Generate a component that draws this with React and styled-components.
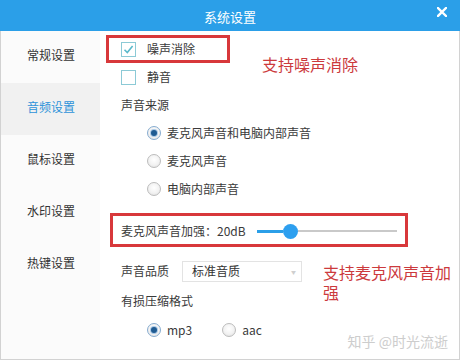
import styled, { createGlobalStyle } from "styled-components";

const GlobalStyle = createGlobalStyle`
  body {
    margin: 0;
    background: #fff;
    font-family: "Noto Sans CJK SC", "Noto Sans", sans-serif;
  }
`;

const Window = styled.div`
  width: 460px;
  height: 360px;
  display: flex;
  flex-direction: column;
  background: #fff;
`;

const TitleBar = styled.div`
  height: 31px;
  flex-shrink: 0;
  background: #2b9fe8;
  color: #fff;
  display: grid;
  grid-template-columns: 1fr auto 1fr;
  align-items: center;
  font-size: 13px;
  line-height: 1;
`;

const Title = styled.div`
  grid-column: 2;
  padding-top: 1px;
`;

const Close = styled.div`
  justify-self: end;
  margin-right: 13px;
  margin-bottom: 8px;
  display: flex;
`;

const Body = styled.div`
  flex: 1;
  display: flex;
  border: 1px solid #d2d2d2;
  border-top: none;
`;

const Sidebar = styled.div`
  width: 99px;
  flex-shrink: 0;
  background: #fbfbfb;
  display: flex;
  flex-direction: column;
`;

const NavItem = styled.div`
  height: 52px;
  box-sizing: border-box;
  padding: 0 0 6px 26px;
  display: flex;
  align-items: center;
  font-size: 12px;
  color: ${(p) => (p.$active ? "#2e93d9" : "#333")};
  background: ${(p) => (p.$active ? "#f1f1f1" : "transparent")};
`;

const Content = styled.div`
  flex: 1;
  position: relative;
  padding-top: 4px;
  display: flex;
  flex-direction: column;
  font-size: 12px;
  color: #3a3a3a;
  line-height: 1;
`;

const Row = styled.div`
  display: flex;
  align-items: center;
  height: ${(p) => p.$h || 28}px;
  padding-left: ${(p) => p.$indent || 0}px;
  margin-top: ${(p) => p.$mt || 0}px;
  flex-shrink: 0;
`;

const Highlight = styled.div`
  box-sizing: border-box;
  border: 3px solid #d8383b;
  display: flex;
  align-items: center;
  flex-shrink: 0;
  width: ${(p) => p.$w}px;
  height: ${(p) => p.$h}px;
  margin-left: ${(p) => p.$ml}px;
  padding-left: ${(p) => p.$pl}px;
  padding-top: ${(p) => p.$pt || 0}px;
`;

const Note = styled.div`
  color: #cc3a3d;
  font-size: 16px;
  line-height: 20px;
  align-self: flex-start;
  flex-shrink: 0;
  margin-left: ${(p) => p.$ml}px;
  margin-top: ${(p) => p.$mt}px;
  width: ${(p) => (p.$w ? `${p.$w}px` : "auto")};
`;

const Box = styled.span`
  width: 15px;
  height: 15px;
  box-sizing: border-box;
  border: 1px solid #8ccad6;
  background: #fff;
  margin-right: 11px;
  display: flex;
  align-items: center;
  justify-content: center;
  flex-shrink: 0;
`;

const Radio = styled.span`
  width: 14px;
  height: 14px;
  box-sizing: border-box;
  border-radius: 50%;
  border: 1px solid ${(p) => (p.$on ? "#86acd0" : "#bcbcbc")};
  background: radial-gradient(circle at 50% 40%, #ffffff 0%, #f2f2f2 55%, #dcdcdc 100%);
  margin-right: 6px;
  margin-left: ${(p) => p.$ml || 0}px;
  display: flex;
  align-items: center;
  justify-content: center;
  flex-shrink: 0;

  &::after {
    content: "";
    display: ${(p) => (p.$on ? "block" : "none")};
    width: 6px;
    height: 6px;
    border-radius: 50%;
    background: #1f5b92;
    box-shadow: 0 0 0 1px #a9c8e6;
  }
`;

const Slider = styled.div`
  width: 140px;
  margin-left: 11px;
  display: flex;
  align-items: center;
`;

const Fill = styled.div`
  width: 26px;
  height: 3px;
  background: #2b9fe8;
`;

const Knob = styled.div`
  width: 15px;
  height: 15px;
  border-radius: 50%;
  background: #2d9fef;
  flex-shrink: 0;
`;

const Rest = styled.div`
  flex: 1;
  height: 2px;
  background: #c9c9c9;
`;

const Select = styled.div`
  width: 120px;
  height: 21px;
  box-sizing: border-box;
  margin-left: 13px;
  border: 1px solid #e3e3e3;
  background: #fff;
  display: flex;
  align-items: center;
  justify-content: space-between;
  padding: 0 5px 0 9px;
  flex-shrink: 0;
  color: #333;
`;

const Caret = styled.span`
  font-size: 5px;
  color: #cfcfcf;
`;

const Watermark = styled.div`
  position: absolute;
  right: 11px;
  bottom: 11px;
  font-size: 14px;
  color: #cdcdcd;
`;

const Check = () => (
  <svg width="11" height="11" viewBox="0 0 11 11">
    <path d="M1.5 5.8 L4.3 8.6 L9.6 2" fill="none" stroke="#5ab9cb" strokeWidth="1.6" />
  </svg>
);

const CloseIcon = () => (
  <svg width="10" height="10" viewBox="0 0 10 10">
    <path d="M1 1 L9 9 M9 1 L1 9" stroke="#fff" strokeWidth="2.4" strokeLinecap="square" />
  </svg>
);

const navItems = ["常规设置", "音频设置", "鼠标设置", "水印设置", "热键设置"];

export default function App() {
  return (
    <Window>
      <GlobalStyle />
      <TitleBar>
        <Title>系统设置</Title>
        <Close>
          <CloseIcon />
        </Close>
      </TitleBar>
      <Body>
        <Sidebar>
          {navItems.map((item) => (
            <NavItem key={item} $active={item === "音频设置"}>
              {item}
            </NavItem>
          ))}
        </Sidebar>
        <Content>
          <Row>
            <Highlight $w={124} $h={28} $ml={6} $pl={12}>
              <Box>
                <Check />
              </Box>
              噪声消除
            </Highlight>
            <Note $ml={32} $mt={19}>支持噪声消除</Note>
          </Row>
          <Row $indent={21}>
            <Box />
            静音
          </Row>
          <Row $indent={21}>声音来源</Row>
          <Row $indent={47}>
            <Radio $on />
            麦克风声音和电脑内部声音
          </Row>
          <Row $indent={47}>
            <Radio />
            麦克风声音
          </Row>
          <Row $indent={47}>
            <Radio />
            电脑内部声音
          </Row>
          <Row $h={34} $mt={10}>
            <Highlight $w={298} $h={34} $ml={10} $pl={8} $pt={2}>
              麦克风声音加强：20dB
              <Slider>
                <Fill />
                <Knob />
                <Rest />
              </Slider>
            </Highlight>
          </Row>
          <Row $h={24} $mt={12} $indent={21}>
            声音品质
            <Select>
              标准音质
              <Caret>▼</Caret>
            </Select>
            <Note $ml={21} $mt={3} $w={130}>支持麦克风声音加强</Note>
          </Row>
          <Row $h={36} $indent={21}>有损压缩格式</Row>
          <Row $h={22} $indent={47}>
            <Radio $on />
            mp3
            <Radio $ml={30} />
            aac
          </Row>
          <Watermark>知乎 @时光流逝</Watermark>
        </Content>
      </Body>
    </Window>
  );
}
